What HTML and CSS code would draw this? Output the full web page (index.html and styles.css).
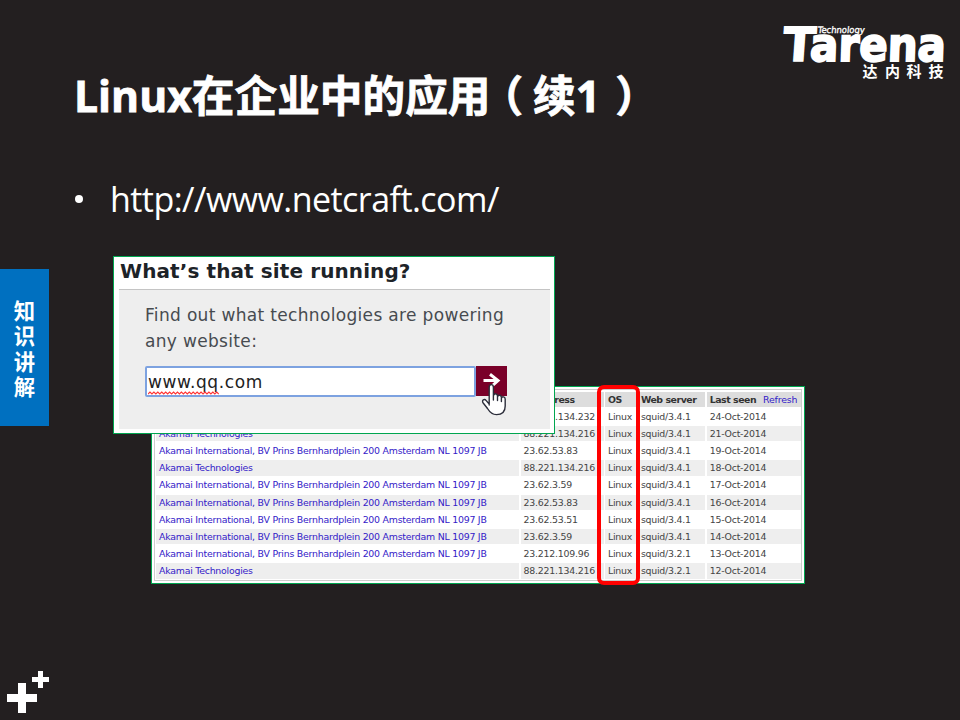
FILE: index.html
```
<!DOCTYPE html>
<html lang="zh-CN">
<head>
<meta charset="utf-8">
<title>Linux在企业中的应用（续1）</title>
<link rel="stylesheet" href="styles.css">
</head>
<body>
<main class="slide">
  <svg class="logo" viewBox="0 -16 180 86" role="img" aria-label="Tarena">
    <text class="logo-word" transform="translate(4 41) skewX(-4)" font-size="47" textLength="32.5" lengthAdjust="spacingAndGlyphs">T</text>
    <text class="logo-word logo-rest" transform="translate(31.5 40.5) skewX(-2)" font-size="46" textLength="136" lengthAdjust="spacingAndGlyphs">arena</text>
    <text class="logo-tech" transform="translate(39.5 12.5) skewX(-6)" font-size="9" textLength="47" lengthAdjust="spacingAndGlyphs">Technology</text>
    <text class="logo-cn" x="84.5 107 128.5 150.5" y="57" font-size="15">达内科技</text>
  </svg>

  <h1 class="title">Linux在企业中的应用<span class="paren-open">（</span>续1<span class="paren-close">）</span></h1>
  <ul class="points">
    <li><span class="dot"></span><span class="url">http://www.netcraft.com/</span></li>
  </ul>

  <aside class="section-tab"><span>知</span><span>识</span><span>讲</span><span>解</span></aside>

  <section class="history">
    <div class="history-table">
      <div class="row head"><span>Netblock owner</span><span>IP address</span><span>OS</span><span>Web server</span><span>Last seen <a>Refresh</a></span></div>
      <div class="row"><a>Akamai Technologies</a><span>88.221.134.232</span><span>Linux</span><span>squid/3.4.1</span><span>24-Oct-2014</span></div>
      <div class="row"><a>Akamai Technologies</a><span>88.221.134.216</span><span>Linux</span><span>squid/3.4.1</span><span>21-Oct-2014</span></div>
      <div class="row"><a>Akamai International, BV Prins Bernhardplein 200 Amsterdam NL 1097 JB</a><span>23.62.53.83</span><span>Linux</span><span>squid/3.4.1</span><span>19-Oct-2014</span></div>
      <div class="row"><a>Akamai Technologies</a><span>88.221.134.216</span><span>Linux</span><span>squid/3.4.1</span><span>18-Oct-2014</span></div>
      <div class="row"><a>Akamai International, BV Prins Bernhardplein 200 Amsterdam NL 1097 JB</a><span>23.62.3.59</span><span>Linux</span><span>squid/3.4.1</span><span>17-Oct-2014</span></div>
      <div class="row"><a>Akamai International, BV Prins Bernhardplein 200 Amsterdam NL 1097 JB</a><span>23.62.53.83</span><span>Linux</span><span>squid/3.4.1</span><span>16-Oct-2014</span></div>
      <div class="row"><a>Akamai International, BV Prins Bernhardplein 200 Amsterdam NL 1097 JB</a><span>23.62.53.51</span><span>Linux</span><span>squid/3.4.1</span><span>15-Oct-2014</span></div>
      <div class="row"><a>Akamai International, BV Prins Bernhardplein 200 Amsterdam NL 1097 JB</a><span>23.62.3.59</span><span>Linux</span><span>squid/3.4.1</span><span>14-Oct-2014</span></div>
      <div class="row"><a>Akamai International, BV Prins Bernhardplein 200 Amsterdam NL 1097 JB</a><span>23.212.109.96</span><span>Linux</span><span>squid/3.2.1</span><span>13-Oct-2014</span></div>
      <div class="row"><a>Akamai Technologies</a><span>88.221.134.216</span><span>Linux</span><span>squid/3.2.1</span><span>12-Oct-2014</span></div>
    </div>
  </section>
  <div class="os-highlight"></div>

  <section class="lookup">
    <h2>What’s that site running?</h2>
    <div class="lookup-body">
      <p>Find out what technologies are powering<br>any website:</p>
      <div class="field">
        <div class="input"><span class="misspelt">www.qq<svg class="squiggle" viewBox="0 0 72 4" preserveAspectRatio="none"><path d="M0 3l2-2 2 2 2-2 2 2 2-2 2 2 2-2 2 2 2-2 2 2 2-2 2 2 2-2 2 2 2-2 2 2 2-2 2 2 2-2 2 2 2-2 2 2 2-2 2 2 2-2 2 2 2-2 2 2 2-2 2 2 2-2 2 2 2-2 2 2 2-2 2 2"/></svg></span>.com</div>
        <div class="go"><svg viewBox="0 0 31 30"><path d="M7.5 14.5H21.5M14 8.3L22 14.5L16 20"/></svg></div>
      </div>
    </div>
    <svg class="pointer" viewBox="0 0 26 34"><path d="M8.2 22V4.4C8.2 .7 12.4 .7 12.4 4.4V13C12.8 10 16.4 10.2 16.5 13V14C17 11.4 20.3 11.8 20.4 14.3V15.4C21 13 24 13.5 24.2 16V23C24.2 29 20.8 31.6 15.5 31.6C10.6 31.6 8.6 29 6.5 25.5L2.2 20C.2 17 3.5 15.6 5.2 17.6L8.2 21M12.4 12V17M16.5 13V17.5M20.4 15V18.5"/></svg>
  </section>

  <svg class="pluses" viewBox="0 0 44 44"><path d="M12 13h8v11h11v8H20v11h-8V32H1v-8h11zM32 1h5v6h6v5h-6v6h-5v-6h-6V7h6z"/></svg>
</main>
</body>
</html>
```
FILE: styles.css
```
* { box-sizing: border-box; }
body { margin: 0; background: #231f20; }
.slide {
  position: relative;
  width: 960px;
  height: 720px;
  overflow: hidden;
  padding: 66px 75px 0;
  background: #231f20;
  color: #fff;
  font-family: "Open Sans", "Noto Sans CJK SC", sans-serif;
}
.logo { position: absolute; left: 778px; top: 4px; width: 180px; height: 86px; fill: #fff; overflow: visible; }
.logo-word { font-family: "DejaVu Sans", sans-serif; font-weight: 700; stroke: #fff; stroke-width: 1.4; }
.logo-rest { stroke-width: 2; }
.logo-tech { font-family: "DejaVu Sans", sans-serif; font-weight: 400; stroke: #fff; stroke-width: .35; }
.logo-cn { font-family: "Noto Sans CJK SC", sans-serif; font-weight: 700; }

.title {
  margin: 0 0 0 -1px; font-size: 42.67px; line-height: 60px; font-weight: 700; white-space: nowrap;
  -webkit-text-stroke: .8px #fff;
}
.paren-open, .paren-close { display: inline-block; width: 42.67px; }
.paren-open { text-indent: -10px; }
.paren-close { text-indent: 15px; }
.points { list-style: none; margin: 43px 0 0; padding: 0; }
.points li { display: flex; align-items: center; height: 60px; }
.dot { width: 8px; height: 8px; margin-right: 27px; border-radius: 50%; background: #fff; }
.url { font-size: 34px; line-height: 60px; letter-spacing: -.55px; white-space: nowrap; }

.section-tab {
  position: absolute; left: 0; top: 269px; width: 49px; height: 157px;
  display: flex; flex-direction: column; align-items: center; justify-content: center;
  background: #0070c0; font: 700 21.33px/25.5px "Noto Sans CJK SC", sans-serif;
}

.history {
  position: absolute; left: 151px; top: 386px; width: 654px; height: 198px;
  padding: 2px; border: 1px solid #00a650; background: #fff;
  font: 9.4px/15.5px "DejaVu Sans", sans-serif; color: #444; letter-spacing: -.23px;
}
.history-table {
  display: grid; grid-template-rows: repeat(11, 15.5px); row-gap: 1.67px;
  height: 192px; padding: 1.6px 1px 0; border: 1px solid #ccc;
}
.row { display: grid; grid-template-columns: 363.3px 83px 31.7px 67.5px 94px; column-gap: 1.3px; white-space: nowrap; }
.row > * { padding-left: 3px; }
.row:nth-child(odd) > * { background: #eee; }
.row.head > * { background: #ddd; font-weight: 700; color: #333; letter-spacing: -.45px; }
.row a { color: #3320c8; }
.row.head a { margin-left: 4px; font-weight: 400; letter-spacing: -.15px; }
.os-highlight {
  position: absolute; left: 597px; top: 385px; width: 43px; height: 200px;
  border: 4px solid #f00; border-radius: 7px;
}

.lookup {
  position: absolute; left: 113px; top: 256px; width: 442px; height: 178px;
  padding: 0 4px 4px 5px; border: 1px solid #00a650; background: #fff;
  font-family: "DejaVu Sans", sans-serif;
}
.lookup h2 {
  margin: 0; height: 33px; padding-left: 1px; border-bottom: 1px solid #c4c4c4;
  color: #1d2328; font: 700 20px/29px "DejaVu Sans", sans-serif; letter-spacing: .1px; white-space: nowrap;
}
.lookup-body { height: 139px; padding: 13px 0 0 26px; background: #eee; }
.lookup p { margin: 0; color: #474b50; font-size: 17px; line-height: 25.5px; letter-spacing: .33px; white-space: nowrap; }
.field { display: flex; width: 362px; height: 31px; margin-top: 12px; }
.input {
  width: 331px; padding-left: 1px; border: 2px solid #7da2e0; border-radius: 2px;
  background: #fff; color: #222; font-size: 17px; line-height: 28px; letter-spacing: .6px;
}
.misspelt { position: relative; display: inline-block; }
.squiggle { position: absolute; left: 0; bottom: 1px; width: 100%; height: 4px; fill: none; stroke: #f33; stroke-width: 1.2; }
.go { width: 31px; height: 30px; background: #7a0029; }
.go svg { display: block; fill: none; stroke: #fff; stroke-width: 3; }
.pointer {
  position: absolute; left: 367px; top: 126px; width: 26px; height: 34px;
  fill: #fff; stroke: #2b2d3a; stroke-width: 1.4; stroke-linejoin: round; stroke-linecap: round;
}
.pluses { position: absolute; left: 6px; top: 670px; width: 44px; height: 44px; fill: #fff; }
```
